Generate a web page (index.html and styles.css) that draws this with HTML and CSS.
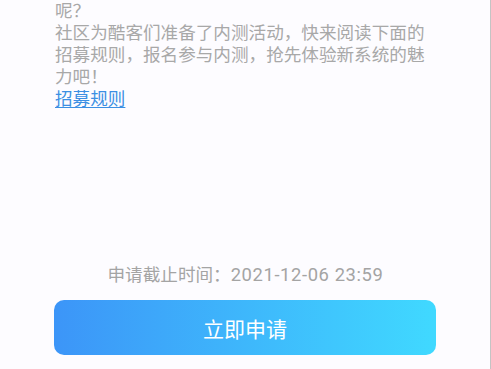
FILE: index.html
```html
<!DOCTYPE html>
<html lang="zh">
<head>
<meta charset="utf-8">
<link rel="stylesheet" href="styles.css">
</head>
<body>
<div class="page">
  <div class="content">
    <p class="para">呢？<br>社区为酷客们准备了内测活动，快来阅读下面的招募规则，报名参与内测，抢先体验新系统的魅力吧！</p>
    <a class="link" href="#">招募规则</a>
  </div>
  <div class="footer">
    <div class="deadline">申请截止时间：<span class="time">2021-12-06 23:59</span></div>
    <button class="apply">立即申请</button>
  </div>
</div>
</body>
</html>
```
FILE: styles.css
```css
html, body {
  margin: 0;
  padding: 0;
  background: #fdfcff;
}
.page {
  width: 490px;
  height: 369px;
  border-right: 1px solid #c4c4c4;
  display: flex;
  flex-direction: column;
  font-family: Roboto, "Noto Sans CJK SC", sans-serif;
  overflow: hidden;
}
.content {
  padding: 0 50px 0 55px;
  flex: 1;
}
.para {
  margin: 0;
  font-size: 17.6px;
  line-height: 22px;
  color: #a8a8a8;
}
.link {
  display: block;
  font-size: 17.6px;
  line-height: 22px;
  color: #3b8fe3;
  text-decoration: underline;
  text-underline-offset: 2px;
}
.footer {
  display: flex;
  flex-direction: column;
  align-items: center;
  padding-bottom: 14px;
}
.deadline {
  font-size: 17.6px;
  line-height: 22px;
  color: #a4a4a4;
  margin-bottom: 14px;
  padding-left: 1px;
}
.time {
  font-size: 18.4px;
  letter-spacing: 0.6px;
}
.apply {
  width: 382px;
  height: 55px;
  border: none;
  border-radius: 10px;
  background: linear-gradient(90deg, #3c95f8, #40d9ff);
  color: #ffffff;
  font-family: Roboto, "Noto Sans CJK SC", sans-serif;
  font-size: 21px;
  padding: 0;
}
```
